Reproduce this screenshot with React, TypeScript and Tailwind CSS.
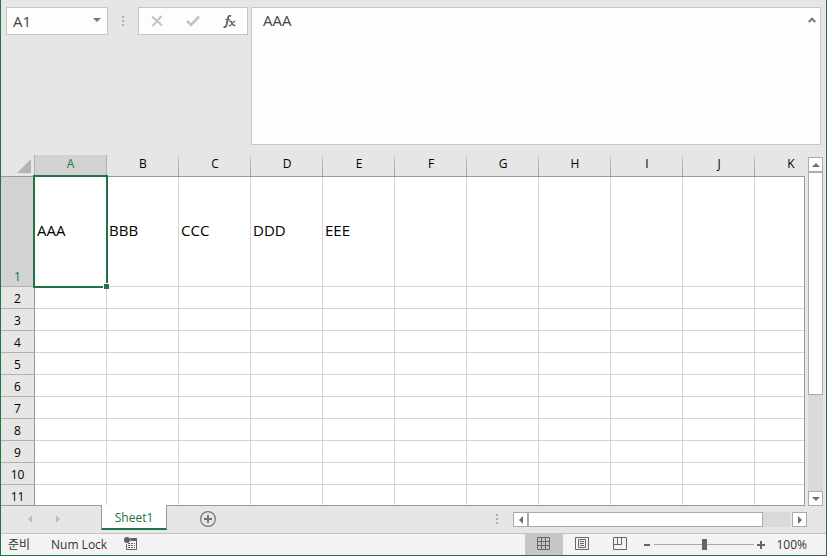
import { useState } from 'react'

// ── Types ──────────────────────────────────────────
interface Row {
  id: number
  cells: string[]
}

// ── Data ───────────────────────────────────────────
const columns = ['A', 'B', 'C', 'D', 'E', 'F', 'G', 'H', 'I', 'J', 'K']

const rows: Row[] = Array.from({ length: 11 }, (_, i) => ({
  id: i + 1,
  cells: i === 0 ? ['AAA', 'BBB', 'CCC', 'DDD', 'EEE'] : [],
}))

// ── Small pieces ───────────────────────────────────
const Grip = () => (
  <svg width="2" height="10" viewBox="0 0 2 10" fill="#b0b0b0" aria-hidden="true">
    <path d="M0 0h2v2H0zM0 4h2v2H0zM0 8h2v2H0z" />
  </svg>
)

const arrowPaths = {
  up: 'M0 4L4 0L8 4Z',
  down: 'M0 0L4 4L8 0Z',
  left: 'M4 0L0 4L4 8Z',
  right: 'M0 0L4 4L0 8Z',
}

const Arrow = ({ direction }: { direction: keyof typeof arrowPaths }) => {
  const vertical = direction === 'up' || direction === 'down'
  return (
    <svg
      width={vertical ? 8 : 4}
      height={vertical ? 4 : 8}
      viewBox={vertical ? '0 0 8 4' : '0 0 4 8'}
      fill="currentColor"
      aria-hidden="true"
    >
      <path d={arrowPaths[direction]} />
    </svg>
  )
}

const ScrollButton = ({ direction }: { direction: keyof typeof arrowPaths }) => (
  <button
    type="button"
    aria-label={`Scroll ${direction}`}
    className="flex size-[15px] shrink-0 items-center justify-center border border-[#ababab] bg-white text-[#707070]"
  >
    <Arrow direction={direction} />
  </button>
)

// ── Formula bar ────────────────────────────────────
const FormulaBar = () => {
  const [formula, setFormula] = useState('AAA')

  return (
    <div className="flex items-start pt-[7px] pr-[5px] pl-[5px]">
      <div className="flex h-7 w-[102px] shrink-0 items-center border border-[#c6c6c6] bg-[#fdfdfd]">
        <input
          aria-label="Name Box"
          defaultValue="A1"
          className="min-w-0 flex-1 pl-1.5 text-[15px] leading-5 text-[#444] outline-none"
        />
        <button type="button" aria-label="Open name list" className="pr-1.5 pb-0.5 text-[#777]">
          <Arrow direction="down" />
        </button>
      </div>
      <div className="flex h-7 w-[30px] shrink-0 items-center justify-center">
        <Grip />
      </div>
      <div className="flex h-7 w-[110px] shrink-0 items-center border border-[#c6c6c6] bg-[#fdfdfd]">
        <button type="button" aria-label="Cancel" className="flex flex-1 justify-center">
          <svg width="12" height="12" viewBox="0 0 12 12" fill="none" stroke="#c3c3c3" strokeWidth="2">
            <path d="M1 1.5L11 10.5M10.5 1L1.5 11" />
          </svg>
        </button>
        <button type="button" aria-label="Enter" className="flex flex-1 justify-center">
          <svg width="14" height="12" viewBox="0 0 14 12" fill="none" stroke="#c3c3c3" strokeWidth="2.6">
            <path d="M1 6L5 10L13 1.5" />
          </svg>
        </button>
        <button type="button" aria-label="Insert Function" className="flex flex-1 justify-center">
          <svg width="13" height="13" viewBox="0 0 13 13" fill="none" stroke="#666">
            <path d="M8 1.2C6.4 .2 5.4 1.2 5 3L3.6 9.6C3.2 11.6 2.2 12.6 .6 11.8" strokeWidth="1.9" />
            <path d="M2.4 4.5H7" strokeWidth="1.2" />
            <path d="M6.2 6.6C8 5.6 8.4 6.8 9 8.2S10.4 11 12.2 10" strokeWidth="1.6" />
            <path d="M12.4 6.2C10.4 6 9 8.6 8 9.8C7.4 10.6 6.6 10.8 5.8 10.4" strokeWidth="1.2" />
          </svg>
        </button>
      </div>
      <div className="ml-[3px] flex h-[138px] min-w-0 flex-1 items-start border border-[#c6c6c6] bg-[#fdfdfd]">
        <textarea
          aria-label="Formula Bar"
          value={formula}
          onChange={(e) => setFormula(e.target.value)}
          className="h-full min-w-0 flex-1 resize-none pt-0.5 pl-[11px] text-[15px] leading-5 text-[#444] outline-none"
        />
        <button type="button" aria-label="Collapse Formula Bar" className="pt-[9px] pr-1">
          <svg width="8" height="6" viewBox="0 0 8 6" fill="none" stroke="#777" strokeWidth="2">
            <path d="M0.7 5L4 1.7L7.3 5" />
          </svg>
        </button>
      </div>
    </div>
  )
}

// ── Grid ───────────────────────────────────────────
const Grid = () => (
  <div className="min-w-0 flex-1 overflow-hidden border-b border-[#999]">
    <table className="w-[826px] table-fixed border-separate border-spacing-0">
      <thead>
        <tr className="h-[22px] text-xs leading-4">
          <th className="w-[34px] border-r border-b border-[#b1b1b1] border-b-[#999] p-0">
            <button type="button" aria-label="Select All" className="flex h-[21px] w-full items-end justify-end pr-[3px] pb-[3px]">
              <svg width="14" height="14" viewBox="0 0 14 14" fill="#b4b4b4">
                <path d="M14 0V14H0Z" />
              </svg>
            </button>
          </th>
          {columns.map((col) => {
            const headClass =
              col === 'A'
                ? 'bg-[#d2d2d2] text-[#217346] border-r border-r-[#b1b1b1]'
                : 'text-black bg-[linear-gradient(to_bottom,#d0d0d0,#999)] bg-[length:1px_100%] bg-right bg-no-repeat'
            return (
              <th key={col} className={`w-[72px] border-b border-b-[#999] p-0 pb-1 font-normal ${headClass}`}>
                {col}
              </th>
            )
          })}
        </tr>
      </thead>
      <tbody>
        {rows.map((row) => {
          const selected = row.id === 1
          const headClass = selected ? 'bg-[#d2d2d2] text-[#217346]' : 'text-black'
          return (
            <tr key={row.id} className={selected ? 'h-[110px]' : 'h-[22px]'}>
              <th
                className={`border-r border-b border-r-[#999] border-b-[#b1b1b1] p-0 pb-px text-center align-bottom text-xs leading-4 font-normal ${headClass}`}
              >
                {row.id}
              </th>
              {columns.map((col, i) => (
                <td
                  key={col}
                  className="relative border-r border-b border-[#d4d4d4] bg-white p-0 pb-0.5 pl-0.5 text-[15px] leading-[19px] text-black"
                >
                  {row.cells[i]}
                  {selected && col === 'A' && (
                    <>
                      <div className="absolute -inset-0.5 z-10 border-2 border-[#217346]" />
                      <div className="absolute -right-[3px] -bottom-[3px] z-20 size-1.5 border-t border-l border-white bg-[#217346]" />
                    </>
                  )}
                </td>
              ))}
            </tr>
          )
        })}
      </tbody>
    </table>
  </div>
)

const VerticalScroll = () => (
  <div className="mt-0.5 mr-[3px] ml-[3px] flex w-[15px] shrink-0 flex-col bg-[#dadada]">
    <ScrollButton direction="up" />
    <div className="h-[223px] border border-[#ababab] bg-white" />
    <div className="flex-1" />
    <ScrollButton direction="down" />
  </div>
)

// ── Sheet tabs ─────────────────────────────────────
const SheetTabs = () => (
  <div className="flex h-7 shrink-0 items-start border-b border-[#c6c6c6]">
    <div className="flex h-[26px] w-[100px] items-center gap-6 pl-[27px] text-[#bdbdbd]">
      <button type="button" aria-label="Previous sheet">
        <Arrow direction="left" />
      </button>
      <button type="button" aria-label="Next sheet">
        <Arrow direction="right" />
      </button>
    </div>
    <button
      type="button"
      className="z-10 -mt-px h-[25px] w-[66px] border-x border-b-2 border-x-[#999] border-b-[#217346] bg-white pt-0.5 text-xs leading-4 text-[#217346]"
    >
      Sheet1
    </button>
    <button type="button" aria-label="New sheet" className="mt-[5px] ml-[33px]">
      <svg width="16" height="16" viewBox="0 0 16 16" fill="none" stroke="#777">
        <circle cx="8" cy="8" r="7.4" strokeWidth="1.2" />
        <path d="M8 4V12M4 8H12" strokeWidth="2" />
      </svg>
    </button>
    <div className="flex-1" />
    <div className="mt-2 mr-[15px]">
      <Grip />
    </div>
    <div className="mt-1.5 mr-[19px] flex w-[294px]">
      <ScrollButton direction="left" />
      <div className="h-[15px] w-[235px] border border-[#ababab] bg-white" />
      <div className="h-[15px] w-[27px] bg-[#dadada]" />
      <div className="flex-1" />
      <ScrollButton direction="right" />
    </div>
  </div>
)

// ── Status bar ─────────────────────────────────────
const views = [
  { name: 'Normal', path: 'M.5.5h12v12H.5zM4.5.5v12M8.5.5v12M.5 4.5h12M.5 8.5h12' },
  { name: 'Page Layout', path: 'M.5.5h13v12H.5zM3.5 2.5h7v8h-7zM5 4.5h4M5 6.5h4M5 8.5h4' },
  { name: 'Page Break Preview', path: 'M.5.5h13v12H.5zM.5 7.5h8v-7M4.5.5v7' },
]

const StatusBar = () => {
  const [view, setView] = useState('Normal')
  const [zoom, setZoom] = useState(100)

  return (
    <div className="flex h-[21px] shrink-0 items-center bg-[#f3f3f3] text-xs leading-4 text-[#333]">
      <span className="ml-[7px] w-[43px]">준비</span>
      <span className="w-[73px]">Num Lock</span>
      <button type="button" aria-label="Record Macro" className="mb-0.5">
        <svg width="14" height="13" viewBox="0 0 14 13" fill="#606060">
          <circle cx="3" cy="3" r="3" />
          <path d="M6 1H13V4H6.5Z" />
          <path d="M2.5 7V12.5H12.5V3" fill="none" stroke="#606060" />
          <path d="M4 6h2v1H4zM7 6h2v1H7zM10 6h1v1h-1zM4 8h2v1H4zM7 8h2v1H7zM10 8h1v1h-1zM4 10h2v1H4zM7 10h2v1H7zM10 10h1v1h-1z" />
        </svg>
      </button>
      <div className="flex-1" />
      {views.map(({ name, path }) => (
        <button
          key={name}
          type="button"
          aria-label={name}
          aria-pressed={view === name}
          onClick={() => setView(name)}
          className={`flex h-full w-[38px] items-center justify-center ${view === name ? 'bg-[#c6c6c6]' : ''}`}
        >
          <svg width="14" height="13" viewBox="0 0 14 13" fill="none" stroke="#666" className="mb-0.5">
            <path d={path} />
          </svg>
        </button>
      ))}
      <button
        type="button"
        aria-label="Zoom out"
        onClick={() => setZoom(Math.max(10, zoom - 10))}
        className="ml-[5px] text-[#666]"
      >
        <svg width="6" height="8" viewBox="0 0 6 8" fill="currentColor">
          <path d="M0 3H6V5H0Z" />
        </svg>
      </button>
      <input
        type="range"
        aria-label="Zoom"
        min={10}
        max={190}
        value={zoom}
        onChange={(e) => setZoom(Number(e.target.value))}
        className="mr-[3px] ml-1 h-[11px] w-[100px] appearance-none bg-[linear-gradient(#ababab,#ababab)] bg-[length:100%_1px] bg-center bg-no-repeat [&::-webkit-slider-thumb]:h-[11px] [&::-webkit-slider-thumb]:w-[5px] [&::-webkit-slider-thumb]:appearance-none [&::-webkit-slider-thumb]:bg-[#666]"
      />
      <button
        type="button"
        aria-label="Zoom in"
        onClick={() => setZoom(Math.min(190, zoom + 10))}
        className="text-[#666]"
      >
        <svg width="8" height="8" viewBox="0 0 8 8" fill="currentColor">
          <path d="M0 3H3V0H5V3H8V5H5V8H3V5H0Z" />
        </svg>
      </button>
      <span className="mr-[19px] ml-[11px]">{zoom}%</span>
    </div>
  )
}

// ── App ────────────────────────────────────────────
export default function App() {
  return (
    <div className="flex h-screen flex-col border-x border-b border-[#217346] bg-[#e6e6e6] font-['Open_Sans','Noto_Sans_CJK_KR',sans-serif]">
      <FormulaBar />
      <div className="mt-2.5 flex min-h-0 flex-1">
        <Grid />
        <div className="mt-[21px] w-px bg-[#999]" />
        <VerticalScroll />
      </div>
      <SheetTabs />
      <StatusBar />
    </div>
  )
}
